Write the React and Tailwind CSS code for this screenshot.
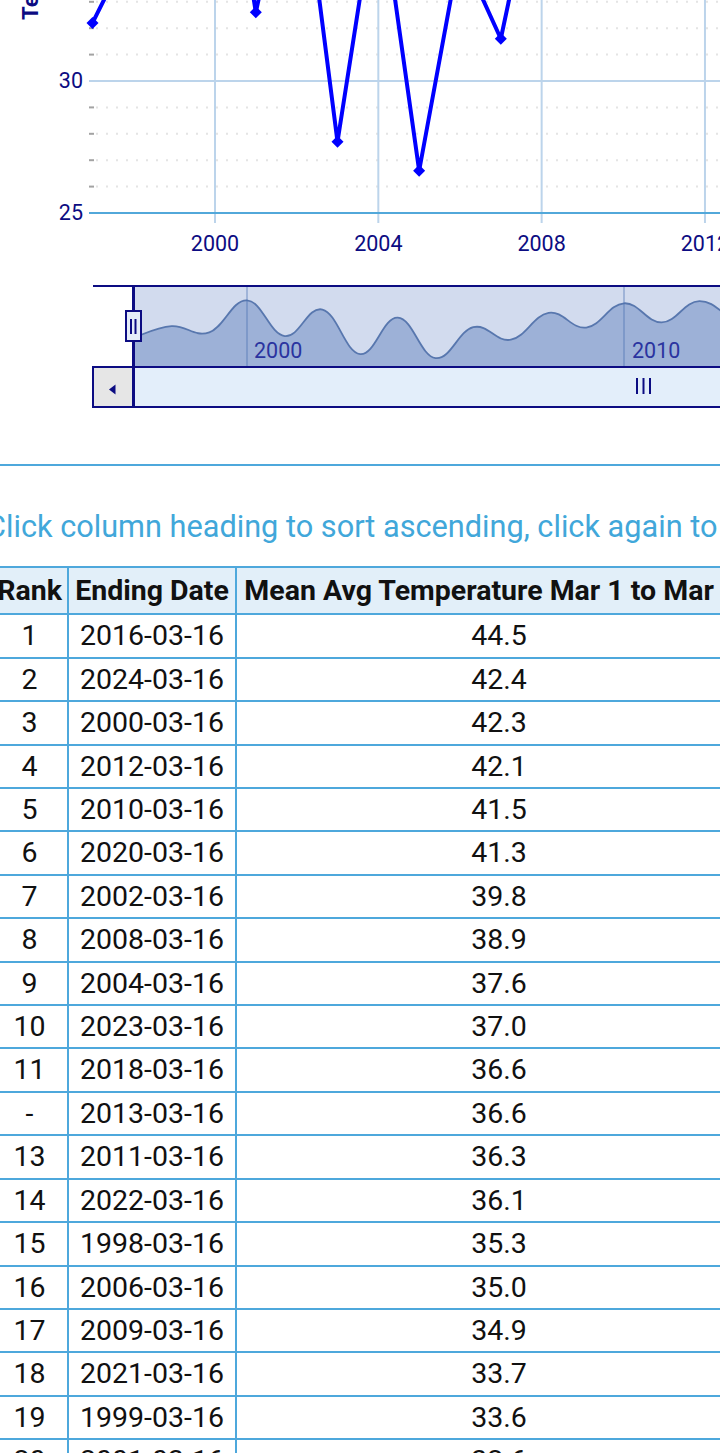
import React from 'react'

// yearly mean temps (Mar 1 - Mar 16)
const SERIES = [
  [1997, 32.2], [1998, 35.3], [1999, 33.6], [2000, 42.3], [2001, 32.6],
  [2002, 39.8], [2003, 27.7], [2004, 37.6], [2005, 26.6], [2006, 35.0],
  [2007, 31.6], [2008, 38.9], [2009, 34.9], [2010, 41.5], [2011, 36.3],
  [2012, 42.1], [2013, 36.6], [2014, 33.5],
]

const ROWS = [
  ['1', '2016-03-16', '44.5'], ['2', '2024-03-16', '42.4'], ['3', '2000-03-16', '42.3'],
  ['4', '2012-03-16', '42.1'], ['5', '2010-03-16', '41.5'], ['6', '2020-03-16', '41.3'],
  ['7', '2002-03-16', '39.8'], ['8', '2008-03-16', '38.9'], ['9', '2004-03-16', '37.6'],
  ['10', '2023-03-16', '37.0'], ['11', '2018-03-16', '36.6'], ['-', '2013-03-16', '36.6'],
  ['13', '2011-03-16', '36.3'], ['14', '2022-03-16', '36.1'], ['15', '1998-03-16', '35.3'],
  ['16', '2006-03-16', '35.0'], ['17', '2009-03-16', '34.9'], ['18', '2021-03-16', '33.7'],
  ['19', '1999-03-16', '33.6'], ['20', '2001-03-16', '32.6'],
]

const NAVY = '#0c0c82'

// main plot scales
const mx = (y) => 215 + (y - 2000) * 40.83
const my = (v) => 81 - (v - 30) * 26.4
// navigator scales
const nx = (y) => 247 + (y - 2000) * 37.7
const ny = (v) => 456 - 3.68 * v

function splinePath(pts) {
  let d = `M${pts[0][0]},${pts[0][1]}`
  for (let i = 0; i < pts.length - 1; i++) {
    const p0 = pts[i - 1] || pts[i]
    const p1 = pts[i]
    const p2 = pts[i + 1]
    const p3 = pts[i + 2] || p2
    const c1x = p1[0] + (p2[0] - p0[0]) * 0.2
    const c1y = p1[1] + (p2[1] - p0[1]) * 0.2
    const c2x = p2[0] - (p3[0] - p1[0]) * 0.2
    const c2y = p2[1] - (p3[1] - p1[1]) * 0.2
    d += ` C${c1x},${c1y} ${c2x},${c2y} ${p2[0]},${p2[1]}`
  }
  return d
}

function Chart() {
  const linePts = SERIES.map(([y, v]) => [mx(y), my(v)])
  const navPts = SERIES.map(([y, v]) => [nx(y), ny(v)])
  const navLine = splinePath(navPts)
  const last = navPts[navPts.length - 1]
  const navArea = `${navLine} L${last[0]},367 L${navPts[0][0]},367 Z`
  const minor = [26, 27, 28, 29, 31, 32, 33]

  return (
    <svg width="720" height="420" className="block font-['Roboto',sans-serif]">
      {/* y axis title */}
      <text transform="translate(38,20) rotate(-90)" fontSize="22" fontWeight="700" fill={NAVY}>
        Temperature (°F)
      </text>

      {/* minor grid */}
      {minor.map((v) => (
        <g key={v}>
          <line x1="96" x2="720" y1={my(v)} y2={my(v)} stroke="#e4e4e4" strokeWidth="2" strokeDasharray="2 8" />
          <line x1="89" x2="94" y1={my(v)} y2={my(v)} stroke="#a3a3a3" strokeWidth="2" />
        </g>
      ))}
      {/* major grid */}
      <line x1="89" x2="720" y1={my(30)} y2={my(30)} stroke="#bcd4eb" strokeWidth="2" />
      {[2000, 2004, 2008, 2012].map((y) => (
        <line key={y} x1={mx(y)} x2={mx(y)} y1="0" y2="223" stroke="#bcd4eb" strokeWidth="2" />
      ))}
      <line x1="89" x2="720" y1={my(25)} y2={my(25)} stroke="#52a8da" strokeWidth="2" />

      {/* y labels */}
      <text x="83" y={my(30) + 7} textAnchor="end" fontSize="21.5" fill={NAVY}>30</text>
      <text x="83" y={my(25) + 7} textAnchor="end" fontSize="21.5" fill={NAVY}>25</text>
      {/* x labels */}
      {[2000, 2004, 2008, 2012].map((y) => (
        <text key={y} x={mx(y)} y="251" textAnchor="middle" fontSize="21.5" fill={NAVY}>{y}</text>
      ))}

      {/* series */}
      <polyline points={linePts.map((p) => p.join(',')).join(' ')} fill="none" stroke="#0000ff" strokeWidth="4" strokeLinejoin="round" />
      {linePts.map(([x, y], i) => (
        <polygon key={i} points={`${x},${y - 6} ${x + 6},${y} ${x},${y + 6} ${x - 6},${y}`} fill="#0000ff" />
      ))}

      {/* navigator */}
      <rect x="133" y="287" width="600" height="80" fill="#d2dbee" />
      <path d={navArea} fill="#9db1d7" />
      <path d={navLine} fill="none" stroke="#5877ae" strokeWidth="1.8" />
      {[2000, 2010].map((y) => (
        <line key={y} x1={nx(y)} x2={nx(y)} y1="287" y2="367" stroke="rgba(70,110,175,0.35)" strokeWidth="2" />
      ))}
      <text x="254" y="358" fontSize="21.5" fill="#2a34a0">2000</text>
      <text x="632" y="358" fontSize="21.5" fill="#2a34a0">2010</text>
      <line x1="93" x2="720" y1="286" y2="286" stroke={NAVY} strokeWidth="2" />

      {/* scrollbar */}
      <rect x="133" y="367" width="600" height="40" fill="#e3eefa" />
      <rect x="93" y="367" width="40" height="40" fill="#e6e6e6" stroke={NAVY} strokeWidth="2" />
      <polygon points="109,389.5 115.5,384.5 115.5,394.5" fill={NAVY} />
      <line x1="93" x2="720" y1="367" y2="367" stroke={NAVY} strokeWidth="2" />
      <line x1="93" x2="720" y1="407" y2="407" stroke={NAVY} strokeWidth="2" />
      {[637, 643.5, 650].map((x) => (
        <line key={x} x1={x} x2={x} y1="378" y2="394" stroke={NAVY} strokeWidth="2" />
      ))}
      <line x1="133.5" x2="133.5" y1="286" y2="408" stroke={NAVY} strokeWidth="3" />

      {/* handle */}
      <rect x="126" y="311" width="15" height="30" fill="#e4ecf8" stroke={NAVY} strokeWidth="2" />
      <line x1="131" x2="131" y1="319" y2="334" stroke={NAVY} strokeWidth="2" />
      <line x1="135.5" x2="135.5" y1="319" y2="334" stroke={NAVY} strokeWidth="2" />
    </svg>
  )
}

export default function App() {
  const cell = 'border-2 border-[#4ea8dc] px-1 py-[5px] leading-[31.4px] text-center'
  return (
    <div className="w-[720px] h-[1453px] overflow-hidden bg-white font-['Roboto',sans-serif] text-[#111]">
      <Chart />

      <div className="mt-[44px] h-[2px] bg-[#4ea8dc]" />

      <p className="mt-[45px] -ml-[14px] whitespace-nowrap text-[30.7px] leading-[32px] text-[#41a7da]">
        Click column heading to sort ascending, click again to sort descending
      </p>

      <table className="mt-[23px] -ml-[10px] table-fixed border-collapse text-[28.5px] w-[771px]">
        <colgroup>
          <col className="w-[77px]" />
          <col className="w-[168px]" />
          <col className="w-[526px]" />
        </colgroup>
        <thead>
          <tr className="bg-[#e2eff9] font-bold">
            <th className={`${cell} pt-[7px] pb-[7px] whitespace-nowrap`}>Rank</th>
            <th className={`${cell} pt-[7px] pb-[7px] whitespace-nowrap`}>Ending Date</th>
            <th className={`${cell} pt-[7px] pb-[7px] whitespace-nowrap`}>Mean Avg Temperature Mar 1 to Mar 16</th>
          </tr>
        </thead>
        <tbody>
          {ROWS.map(([rank, date, temp], i) => (
            <tr key={i}>
              <td className={cell}>{rank}</td>
              <td className={cell}>{date}</td>
              <td className={cell}>{temp}</td>
            </tr>
          ))}
        </tbody>
      </table>
    </div>
  )
}
